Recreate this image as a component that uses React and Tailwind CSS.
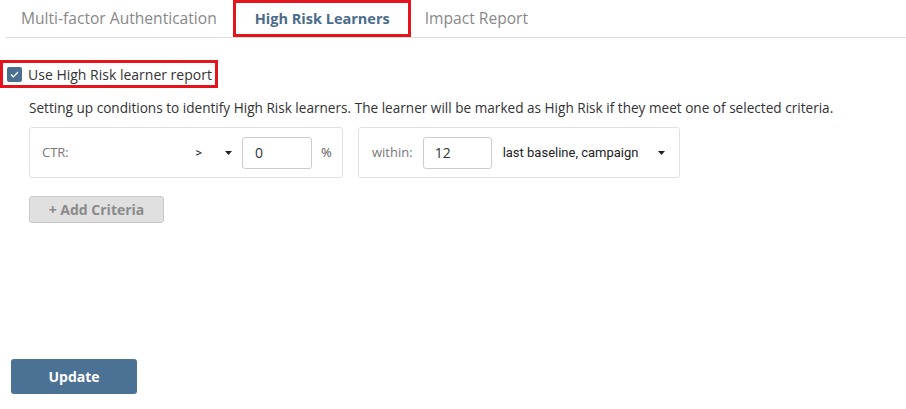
import React, { useState } from "react";

const Caret = () => (
  <svg width="7" height="4" viewBox="0 0 7 4" className="fill-[#222]">
    <path d="M0 0h7L3.5 4z" />
  </svg>
);

export default function App() {
  const [enabled, setEnabled] = useState(true);
  const tabs = ["Multi-factor Authentication", "High Risk Learners", "Impact Report"];
  const active = 1;

  return (
    <div className="w-[906px] h-[409px] bg-white font-['Open_Sans',sans-serif] text-[#333] flex flex-col">
      {/* Tabs */}
      <div className="ml-[6px] h-[38px] flex items-stretch border-b border-[#dddddd]">
        {tabs.map((tab, i) => (
          <div
            key={tab}
            className={`flex items-center ${
              i === active
                ? "ml-[16px] mr-[14px] pl-[19px] pr-[18px] border-[3px] border-[#e3141c] text-[14.5px] font-bold text-[#4a6b8b]"
                : i === 0
                ? "ml-[15px] text-[15.6px] text-[#888]"
                : "text-[15.6px] text-[#888]"
            }`}
          >
            {tab}
          </div>
        ))}
      </div>

      {/* Checkbox */}
      <div className="mt-[22px] w-[218px] h-[28px] border-[3px] border-[#e3141c] flex items-center pl-[4px] gap-[6px]">
        <button
          onClick={() => setEnabled(!enabled)}
          className="w-[15px] h-[15px] rounded-[2px] bg-[#4a6f91] flex items-center justify-center"
        >
          {enabled && (
            <svg width="9" height="7" viewBox="0 0 9 7" fill="none" stroke="white" strokeWidth="1.3">
              <path d="M1 3.5l2.4 2.4L8 1" />
            </svg>
          )}
        </button>
        <span className="text-[14px] text-[#333]">Use High Risk learner report</span>
      </div>

      <div className="pl-[29px]">
        <p className="mt-[10px] text-[13.6px] text-[#333]">
          Setting up conditions to identify High Risk learners. The learner will be marked as High Risk if they meet one of selected criteria.
        </p>

        {/* Criteria row */}
        <div className="mt-[9px] flex gap-[15px]">
          <div className="w-[314px] h-[51px] border border-[#e2e2e2] rounded-[3px] flex items-center pl-[12px] pr-[11px]">
            <span className="text-[13px] text-[#777]">CTR:</span>
            <span className="ml-auto text-[13px] text-[#333] font-['Roboto',sans-serif]">&gt;</span>
            <span className="ml-[23px]">
              <Caret />
            </span>
            <div className="ml-[10px] w-[70px] h-[32px] border border-[#ccc] rounded-[3px] flex items-center px-[12px] text-[14px]">
              0
            </div>
            <span className="ml-[9px] w-[10px] text-[13px] text-[#555]">%</span>
          </div>

          <div className="w-[322px] h-[51px] border border-[#e2e2e2] rounded-[3px] flex items-center pl-[13px] pr-[14px]">
            <span className="text-[13px] text-[#777]">within:</span>
            <div className="ml-[10px] w-[69px] h-[32px] border border-[#ccc] rounded-[3px] flex items-center px-[11px] text-[14px]">
              12
            </div>
            <span className="ml-[11px] text-[13px] text-[#222] font-['Roboto',sans-serif]">last baseline, campaign</span>
            <span className="ml-auto">
              <Caret />
            </span>
          </div>
        </div>

        <button className="mt-[18px] w-[135px] h-[27px] bg-[#e0e0e0] border border-[#c8c8c8] rounded-[3px] text-[14px] font-bold text-[#8a8a8a]">
          + Add Criteria
        </button>
      </div>

      <div className="pl-[11px] mt-auto mb-[15px]">
        <button className="w-[126px] h-[35px] bg-[#4b7194] rounded-[3px] text-white text-[14px] font-bold">
          Update
        </button>
      </div>
    </div>
  );
}
